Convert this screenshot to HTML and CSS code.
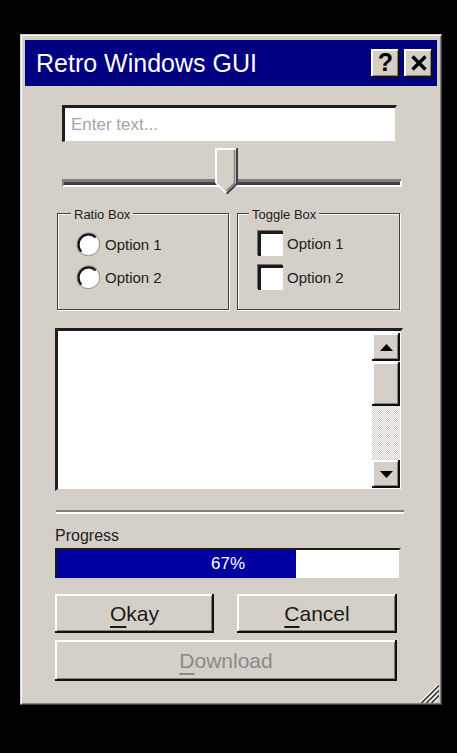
FILE: index.html
```html
<!DOCTYPE html>
<html>
<head>
<meta charset="utf-8">
<link rel="stylesheet" href="styles.css">
</head>
<body>
<div class="window">
  <div class="titlebar">
    <span class="title">Retro Windows GUI</span>
    <div class="title-buttons">
      <div class="tbtn raised help">?</div>
      <div class="tbtn raised">
        <svg width="18" height="18" viewBox="0 0 18 18"><path d="M2.5 2.5L15.5 15.5M15.5 2.5L2.5 15.5" stroke="#000" stroke-width="3.4" fill="none"/></svg>
      </div>
    </div>
  </div>
  <div class="content">
    <div class="textbox"><span class="placeholder">Enter text...</span></div>

    <div class="slider">
      <div class="track"></div>
      <svg class="thumb" width="23" height="46" viewBox="0 0 23 46">
        <path d="M1 1H22V35L11.5 45.5L1 35Z" fill="#d4d0c8"/>
        <path d="M1 35V1H21" fill="none" stroke="#fff" stroke-width="2"/>
        <path d="M1 35L11.5 45.5" fill="none" stroke="#fff" stroke-width="1.5"/>
        <path d="M19.5 2V35L11.5 43" fill="none" stroke="#808080" stroke-width="1.5"/>
        <path d="M22 0V35.5L11.5 46" fill="none" stroke="#404040" stroke-width="2"/>
      </svg>
    </div>

    <div class="groups">
      <div class="group ratio">
        <span class="legend">Ratio Box</span>
        <div class="option">
          <svg class="radio" width="25" height="25" viewBox="0 0 25 25">
            <circle cx="12.5" cy="12.5" r="10.5" fill="#fff"/>
            <path d="M4.37 20.63A11.5 11.5 0 0 1 20.63 4.37" fill="none" stroke="#808080" stroke-width="1.2"/>
            <path d="M5.43 19.57A10 10 0 0 1 19.57 5.43" fill="none" stroke="#111" stroke-width="2"/>
            <path d="M20.63 4.37A11.5 11.5 0 0 1 4.37 20.63" fill="none" stroke="#9a9a9a" stroke-width="1"/>
          </svg>
          <span>Option 1</span>
        </div>
        <div class="option">
          <svg class="radio" width="25" height="25" viewBox="0 0 25 25">
            <circle cx="12.5" cy="12.5" r="10.5" fill="#fff"/>
            <path d="M4.37 20.63A11.5 11.5 0 0 1 20.63 4.37" fill="none" stroke="#808080" stroke-width="1.2"/>
            <path d="M5.43 19.57A10 10 0 0 1 19.57 5.43" fill="none" stroke="#111" stroke-width="2"/>
            <path d="M20.63 4.37A11.5 11.5 0 0 1 4.37 20.63" fill="none" stroke="#9a9a9a" stroke-width="1"/>
          </svg>
          <span>Option 2</span>
        </div>
      </div>
      <div class="group toggle">
        <span class="legend">Toggle Box</span>
        <div class="option">
          <span class="check"></span>
          <span>Option 1</span>
        </div>
        <div class="option">
          <span class="check"></span>
          <span>Option 2</span>
        </div>
      </div>
    </div>

    <div class="listbox">
      <div class="list-area"></div>
      <div class="scrollbar">
        <div class="sb-btn raised">
          <svg width="13" height="7" viewBox="0 0 13 7"><path d="M0 7L6.5 0L13 7Z" fill="#000"/></svg>
        </div>
        <div class="sb-thumb raised"></div>
        <div class="sb-track"></div>
        <div class="sb-btn raised">
          <svg width="13" height="7" viewBox="0 0 13 7"><path d="M0 0L13 0L6.5 7Z" fill="#000"/></svg>
        </div>
      </div>
    </div>

    <div class="separator"></div>

    <div class="progress-label">Progress</div>
    <div class="progress">
      <div class="fill" style="width: 70%"></div>
      <span class="pct">67%</span>
    </div>

    <div class="button-row">
      <div class="btn raised okay"><span><u>O</u>kay</span></div>
      <div class="btn raised cancel"><span><u>C</u>ancel</span></div>
    </div>
    <div class="btn raised download disabled"><span><u>D</u>ownload</span></div>
  </div>

  <svg class="grip" width="20" height="20" viewBox="0 0 20 20" shape-rendering="crispEdges">
    <path d="M19 1L1 19M19 6L6 19M19 11L11 19M19 16L16 19" stroke="#fff" stroke-width="1"/>
    <path d="M20 2L2 20M20 3L3 20M20 7L7 20M20 8L8 20M20 12L12 20M20 13L13 20" stroke="#404040" stroke-width="1"/>
  </svg>
</div>
</body>
</html>
```

FILE: styles.css
```css
* {
  box-sizing: border-box;
}

html,
body {
  margin: 0;
  background: #000;
}

body {
  width: 457px;
  height: 753px;
  overflow: hidden;
  padding: 34px 0 0 20px;
  font-family: "Liberation Sans", Arial, sans-serif;
  color: #222;
}

.window {
  position: relative;
  width: 422px;
  height: 671px;
  background: #d4d0c8;
  border: 1px solid;
  border-color: #d4d0c8 #404040 #404040 #d4d0c8;
  box-shadow: inset 1px 1px #fff, inset -1px -1px #808080;
  padding: 5px 4px 4px 4px;
}

.raised {
  background: #d4d0c8;
  box-shadow: inset -2px -2px #111, inset 2px 2px #fff, inset -3px -3px #808080;
}

/* Title bar */
.titlebar {
  height: 46px;
  background: #000080;
  display: flex;
  align-items: center;
  justify-content: space-between;
  padding: 0 4px 0 11px;
}

.title {
  color: #fff;
  font-size: 25px;
  line-height: 28px;
}

.title-buttons {
  display: flex;
  gap: 4px;
}

.tbtn {
  width: 29px;
  height: 29px;
  display: flex;
  align-items: center;
  justify-content: center;
}

.help {
  font-size: 25px;
  font-weight: bold;
  color: #000;
  line-height: 29px;
  padding-bottom: 1px;
}

/* Content */
.content {
  padding: 0 33px 0 30px;
}

.textbox {
  margin: 19px 0 0 7px;
  width: 335px;
  height: 37px;
  background: #fff;
  border-style: solid;
  border-width: 3px 2px 1px 3px;
  border-color: #1e1e1e #d4d0c8 #d4d0c8 #1e1e1e;
  padding: 1px 0 0 6px;
}

.placeholder {
  font-size: 17px;
  line-height: 32px;
  color: #a4a4a4;
}

.slider {
  position: relative;
  margin: 6px 0 0 7px;
  width: 340px;
  height: 46px;
  padding-top: 31px;
}

.track {
  height: 8px;
  border-style: solid;
  border-width: 3px 2px 2px 2px;
  border-color: #808080 #fff #fff #808080;
  background: #404040;
}

.thumb {
  position: absolute;
  left: 153px;
  top: 0;
}

/* Group boxes */
.groups {
  display: flex;
  gap: 8px;
  margin: 19px 0 0 2px;
}

.group {
  position: relative;
  height: 97px;
  border: 1px solid #404040;
  box-shadow: 1px 1px #fff, inset 1px 1px #fff;
  display: flex;
  flex-direction: column;
  gap: 9px;
}

.ratio {
  width: 172px;
  padding: 18px 0 0 18px;
}

.toggle {
  width: 163px;
  padding: 17px 0 0 20px;
}

.legend {
  position: absolute;
  top: -7px;
  left: 13px;
  padding: 0 3px;
  background: #d4d0c8;
  font-size: 13px;
  line-height: 15px;
}

.toggle .legend {
  left: 11px;
}

.option {
  display: flex;
  align-items: center;
  gap: 4px;
  font-size: 15px;
  height: 24px;
}

.toggle .option {
  height: 25px;
  gap: 4px;
}

.radio {
  display: block;
  flex: none;
}

.check {
  width: 25px;
  height: 25px;
  flex: none;
  background: #fff;
  border-top: 3px solid #1a1a1a;
  border-left: 3px solid #1a1a1a;
  box-shadow: -1px -1px #707070;
}

/* List box */
.listbox {
  margin-top: 18px;
  width: 348px;
  height: 163px;
  display: flex;
  background: #fff;
  border-style: solid;
  border-width: 3px 2px 2px 3px;
  border-color: #1e1e1e #d4d0c8 #d4d0c8 #1e1e1e;
  padding: 2px 1px 1px 0;
}

.list-area {
  flex: 1;
}

.scrollbar {
  width: 28px;
  display: flex;
  flex-direction: column;
}

.sb-btn {
  height: 28px;
  flex: none;
  display: flex;
  align-items: center;
  justify-content: center;
}

.sb-btn svg {
  display: block;
}

.sb-thumb {
  height: 44px;
  margin-top: 1px;
  flex: none;
}

.sb-track {
  flex: 1;
  background: repeating-conic-gradient(#d4d0c8 0 25%, #fff 0 50%) 0 0 / 2px 2px;
}

/* Separator */
.separator {
  margin: 19px 0 0 1px;
  width: 348px;
  height: 4px;
  border-top: 2px solid #808080;
  border-bottom: 2px solid #fff;
}

/* Progress */
.progress-label {
  margin-top: 13px;
  font-size: 16px;
  line-height: 18px;
}

.progress {
  margin-top: 3px;
  width: 346px;
  height: 30px;
  display: grid;
  background: #fff;
  border-top: 2px solid #1a1a1a;
  border-left: 2px solid #1a1a1a;
  border-right: 2px solid #d4d0c8;
}

.fill {
  grid-area: 1 / 1;
  background: #0000a0;
}

.pct {
  grid-area: 1 / 1;
  justify-self: center;
  align-self: center;
  color: #fff;
  font-size: 17px;
  line-height: 20px;
}

/* Buttons */
.button-row {
  display: flex;
  gap: 23px;
  margin-top: 16px;
}

.btn {
  height: 39px;
  display: flex;
  align-items: center;
  justify-content: center;
  font-size: 21px;
  color: #1a1a1a;
}

.btn u {
  text-underline-offset: 5px;
  text-decoration-thickness: 2px;
}

.okay {
  width: 159px;
}

.cancel {
  width: 160px;
}

.download {
  width: 342px;
  height: 41px;
  margin-top: 7px;
}

.disabled {
  color: #8a8a8a;
}

.grip {
  position: absolute;
  right: 2px;
  bottom: 1px;
}
```
